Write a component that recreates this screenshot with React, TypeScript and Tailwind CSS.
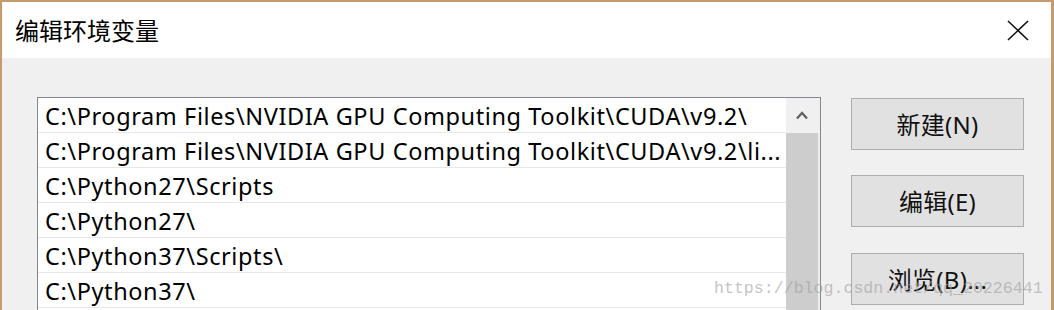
import React from "react";

const rows = [
  "C:\\Program Files\\NVIDIA GPU Computing Toolkit\\CUDA\\v9.2\\",
  "C:\\Program Files\\NVIDIA GPU Computing Toolkit\\CUDA\\v9.2\\li...",
  "C:\\Python27\\Scripts",
  "C:\\Python27\\",
  "C:\\Python37\\Scripts\\",
  "C:\\Python37\\",
  "",
];

const font = { fontFamily: '"Noto Sans", "Noto Sans CJK SC", sans-serif' };

function Btn({ label, className = "" }: { label: string; className?: string }) {
  return (
    <div
      className={`h-[52px] w-[173px] border border-[#adadad] bg-[#e1e1e1] flex items-center justify-center text-[24px] tracking-[0.3px] text-[#111] ${className}`}
      style={font}
    >
      <span className="leading-none pt-[2px]">{label}</span>
    </div>
  );
}

export default function App() {
  return (
    <div className="relative w-[1054px] h-[310px] overflow-hidden border-t-2 border-l-2 border-r-[3px] border-[#c59b6b] bg-[#f0f0f0]">
      <div className="h-[56px] bg-white flex items-center justify-between pl-[13px] pr-[22px]">
        <span
          className="text-[24px] leading-none text-black"
          style={{ fontFamily: '"Noto Sans CJK SC", sans-serif' }}
        >
          编辑环境变量
        </span>
        <svg width="22" height="21" viewBox="0 0 22 21" className="block">
          <path d="M1 1 L21 20 M21 1 L1 20" stroke="#111" strokeWidth="1.6" fill="none" />
        </svg>
      </div>
      <div className="flex pl-[35px] pt-[39px]">
        <div className="w-[784px] h-[260px] border border-[#828790] bg-white flex overflow-hidden">
          <div className="w-[748px] flex flex-col">
            {rows.map((r, i) => (
              <div
                key={i}
                className="h-[35px] shrink-0 border-b border-[#e8e8e8] pl-[7px] flex items-center text-[23.5px] tracking-[0.6px] text-black whitespace-nowrap overflow-hidden"
                style={font}
              >
                <span className="leading-none pt-[4px]">{r}</span>
              </div>
            ))}
          </div>
          <div className="w-[34px] bg-[#f0f0f0] flex flex-col">
            <div className="h-[35px] flex items-center justify-center pr-[2px]">
              <svg width="12" height="9" viewBox="0 0 12 9">
                <path d="M1 7.5 L6 2 L11 7.5" stroke="#606060" strokeWidth="2.2" fill="none" />
              </svg>
            </div>
            <div className="w-[32px] flex-1 bg-[#cdcdcd]" />
          </div>
        </div>
        <div className="ml-[30px] mt-px flex flex-col">
          <Btn label="新建(N)" />
          <Btn label="编辑(E)" className="mt-[25px]" />
          <Btn label="浏览(B)..." className="mt-[26px]" />
        </div>
      </div>
      <div
        className="absolute left-[712px] top-[279px] text-[16.6px] leading-none text-[#a0a0a0] opacity-60 whitespace-nowrap"
        style={{ fontFamily: '"Liberation Mono", monospace' }}
      >
        https://blog.csdn.net/qq_20226441
      </div>
    </div>
  );
}
